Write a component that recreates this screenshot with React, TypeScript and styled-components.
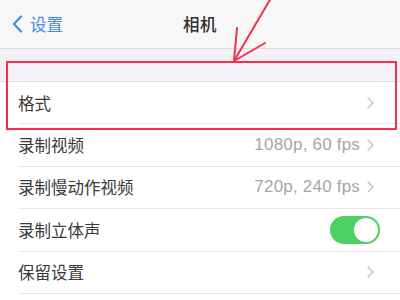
import React from "react";
import styled, { createGlobalStyle } from "styled-components";

const GlobalStyle = createGlobalStyle`
  body {
    margin: 0;
    background: #ffffff;
    font-family: "Noto Sans CJK SC", "Noto Sans", "Liberation Sans", sans-serif;
  }
`;

const Screen = styled.div`
  position: relative;
  width: 400px;
  height: 300px;
  overflow: hidden;
  background: #ffffff;
`;

const NavBar = styled.div`
  height: 49px;
  box-sizing: border-box;
  display: grid;
  grid-template-columns: 1fr auto 1fr;
  align-items: center;
  padding: 0 12px;
  background: #f7f7f7;
  border-bottom: 1px solid #dcdcde;
`;

const BackButton = styled.div`
  display: flex;
  align-items: center;
  gap: 7px;
  color: #4a88ee;
  font-size: 16.5px;
`;

const Title = styled.div`
  font-size: 16.5px;
  font-weight: 500;
  color: #2e2e2e;
  letter-spacing: 0.5px;
`;

const GroupGap = styled.div`
  height: 32px;
  background: #f2f2f6;
  border-bottom: 1px solid #e2e2e4;
`;

const List = styled.div`
  display: flex;
  flex-direction: column;
  padding-left: 18px;
`;

const Row = styled.div`
  height: 42.4px;
  box-sizing: border-box;
  display: flex;
  align-items: center;
  padding-right: 26px;
  border-bottom: 1px solid #e6e6e8;
`;

const Label = styled.span`
  flex: 1;
  font-size: 16.5px;
  color: #3a3a3a;
`;

const Value = styled.span`
  font-family: "Liberation Sans", "Noto Sans", sans-serif;
  font-size: 17px;
  letter-spacing: 0.2px;
  color: #a6a6aa;
  margin-right: 7px;
`;

const Toggle = styled.div`
  width: 50px;
  height: 28px;
  border-radius: 14px;
  background: #4cd164;
  position: relative;
  margin-right: -6px;
`;

const Knob = styled.div`
  position: absolute;
  right: 2px;
  top: 2px;
  width: 24px;
  height: 24px;
  border-radius: 50%;
  background: #ffffff;
`;

const Overlay = styled.svg`
  position: absolute;
  left: 0;
  top: 0;
  pointer-events: none;
`;

const Chevron = () => (
  <svg width="7" height="12" viewBox="0 0 7 12">
    <path d="M1 1l5 5-5 5" fill="none" stroke="#c4c4c8" strokeWidth="1.5" strokeLinecap="round" strokeLinejoin="round" />
  </svg>
);

type Item = { label: string; value?: string; toggle?: boolean };

const items: Item[] = [
  { label: "格式" },
  { label: "录制视频", value: "1080p, 60 fps" },
  { label: "录制慢动作视频", value: "720p, 240 fps" },
  { label: "录制立体声", toggle: true },
  { label: "保留设置" },
];

export default function App() {
  return (
    <Screen>
      <GlobalStyle />
      <NavBar>
        <BackButton>
          <svg width="11" height="18" viewBox="0 0 11 18">
            <path d="M9 1.5L2 9l7 7.5" fill="none" stroke="#4a88ee" strokeWidth="2.2" strokeLinecap="round" strokeLinejoin="round" />
          </svg>
          设置
        </BackButton>
        <Title>相机</Title>
        <div />
      </NavBar>
      <GroupGap />
      <List>
        {items.map((it) => (
          <Row key={it.label}>
            <Label>{it.label}</Label>
            {it.value && <Value>{it.value}</Value>}
            {it.toggle ? (
              <Toggle>
                <Knob />
              </Toggle>
            ) : (
              <Chevron />
            )}
          </Row>
        ))}
      </List>
      <Overlay width="400" height="300" viewBox="0 0 400 300">
        <rect x="7" y="62" width="389" height="67" fill="none" stroke="#f5304f" strokeWidth="2" />
        <g stroke="#f5304f" strokeWidth="2" strokeLinecap="round" fill="none">
          <path d="M271 -2L234 61" />
          <path d="M234 61L237 28" />
          <path d="M234 61L265 43" />
        </g>
      </Overlay>
    </Screen>
  );
}
